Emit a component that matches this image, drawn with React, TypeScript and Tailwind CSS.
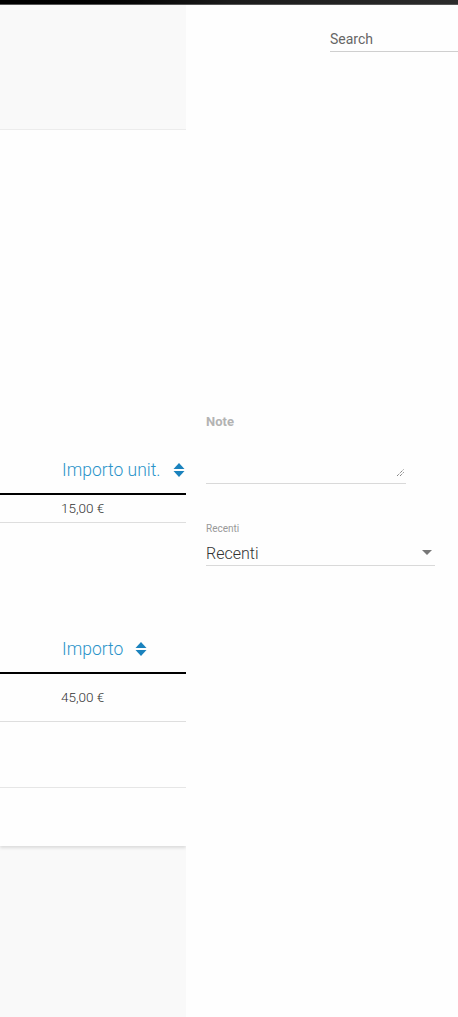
import React from "react"

function SortIcon() {
  return (
    <svg width="12" height="16" viewBox="0 0 12 16" className="shrink-0">
      <path d="M6 1 L11.5 7 L0.5 7 Z" fill="#1a82bd" />
      <path d="M6 15 L11.5 9 L0.5 9 Z" fill="#1a82bd" />
    </svg>
  )
}

function HeaderRow({ label }: { label: string }) {
  return (
    <div className="h-[42px] flex items-end pb-[11px] pl-[62px] border-b-2 border-black">
      <span className="inline-flex items-center gap-[12px] text-[17.5px] leading-6 font-light text-[#2a93c9]">
        {label}
        <SortIcon />
      </span>
    </div>
  )
}

export default function App() {
  return (
    <div className="h-[1017px] w-full overflow-hidden flex flex-col bg-white font-['Roboto',_'Liberation_Sans',_sans-serif]">
      <div className="h-[5px] shrink-0 bg-gradient-to-r from-black via-[#1b1b1b] to-[#2c2c2c] border-b border-[#555]" />

      <div className="flex flex-1">
        {/* left panel */}
        <div className="w-[186px] shrink-0 flex flex-col bg-[#f9f9f9]">
          <div className="h-[125px] border-b border-[#ededed]" />
          <div className="h-[716px] bg-[#fefefe] shadow-[0_2px_3px_rgba(0,0,0,0.12)] flex flex-col">
            <div className="h-[323px]" />
            <HeaderRow label="Importo unit." />
            <div className="h-[28px] flex items-center pl-[61px] text-[13.5px] font-light text-[#333] border-b border-[#dedede]">
              15,00 €
            </div>
            <div className="h-[109px]" />
            <HeaderRow label="Importo" />
            <div className="h-[48px] flex items-center pl-[61px] text-[13.5px] font-light text-[#333] border-b border-[#dedede]">
              45,00 €
            </div>
            <div className="h-[66px] border-b border-[#e6e6e6]" />
          </div>
        </div>

        {/* right panel */}
        <div className="flex-1 bg-[#fefefe]">
          <div className="pl-[144px] pt-[23px]">
            <div className="h-[24px] border-b border-[#cfcfcf] flex items-center text-[14px] text-[#666]">
              Search
            </div>
          </div>

          <div className="pl-[20px] pt-[362px]">
            <div className="text-[13px] font-bold text-[#b3b3b3] leading-4">Note</div>
            <div className="mt-[18px] w-[200px] h-[36px] border-b border-[#d9d9d9] relative">
              <svg width="9" height="9" viewBox="0 0 9 9" className="absolute right-[1px] bottom-[6px]">
                <path d="M1 8 L8 1 M4 8 L8 4" stroke="#555" strokeWidth="1" strokeDasharray="1 1" />
              </svg>
            </div>

            <div className="mt-[39px] text-[10px] text-[#999] leading-3">Recenti</div>
            <div className="mt-[7px] w-[229px] h-[24px] border-b border-[#d9d9d9] flex items-center justify-between">
              <span className="text-[16px] font-light text-[#333]">Recenti</span>
              <svg width="10" height="5" viewBox="0 0 10 5" className="mr-[3px] -mt-[3px]">
                <path d="M0 0 L10 0 L5 5 Z" fill="#777" />
              </svg>
            </div>
          </div>
        </div>
      </div>
    </div>
  )
}
